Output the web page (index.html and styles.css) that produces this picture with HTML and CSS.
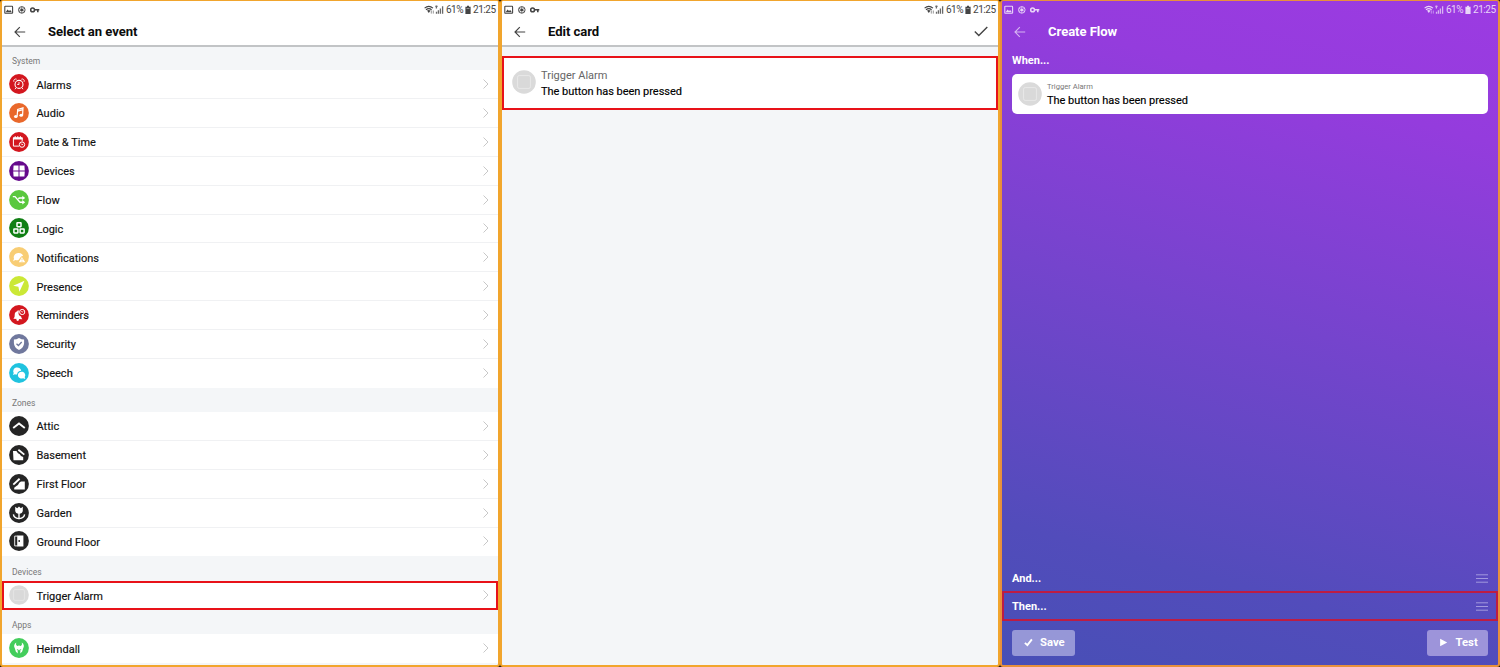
FILE: index.html
```html
<!DOCTYPE html>
<html lang="en">
<head>
<meta charset="utf-8">
<title>Flow editor</title>
<link rel="stylesheet" href="styles.css">
</head>
<body>
<svg class="sprite" xmlns="http://www.w3.org/2000/svg">
  <symbol id="chevron" viewBox="0 0 8 12"><path d="M1.5 1.5L6 6L1.5 10.5" fill="none" stroke="currentColor"/></symbol>
  <symbol id="back" viewBox="0 0 12 12"><path d="M11.2 6H1.2M5.8 1.2L1 6L5.8 10.8" fill="none" stroke="currentColor" stroke-width="1.15"/></symbol>
  <symbol id="notes" viewBox="0 0 36 10">
    <rect x=".8" y="1.3" width="7.8" height="7" rx=".6" fill="none" stroke="currentColor" stroke-width="1.1"/>
    <path d="M1.6 7.3L3.6 4.6L5 6L6.2 4.9L7.9 7.3Z" fill="currentColor"/>
    <circle cx="17.8" cy="4.9" r="3.3" fill="none" stroke="currentColor" stroke-width=".9"/>
    <path d="M17.8 1.6V8.2M14.9 3.3L20.7 6.5M14.9 6.5L20.7 3.3" stroke="currentColor" stroke-width=".75"/>
    <circle cx="17.8" cy="4.9" r="1.2" fill="currentColor"/>
    <circle cx="28.6" cy="4.9" r="1.9" fill="none" stroke="currentColor" stroke-width="1.5"/>
    <path d="M30.5 4.8H35.3M33.8 4.8V7.2" fill="none" stroke="currentColor" stroke-width="1.6"/>
  </symbol>
  <symbol id="signal" viewBox="0 0 21 10">
    <path d="M.6 3.1Q4.8 -.3 9 3.1M2 4.8Q4.8 2.6 7.6 4.8" fill="none" stroke="currentColor" stroke-width="1.2"/>
    <path d="M3 5.6Q4.8 4.3 6.6 5.6L4.8 8Z" fill="currentColor"/>
    <path d="M7.3 5.5V8.6M9.3 5.5V8.6" stroke="currentColor" stroke-width=".8" opacity=".7"/>
    <path d="M11.3 1.4H13.6M12.4 .6V3.6M12.5 8.8V6.8M14.4 8.8V5.2M16.4 8.8V3.5M18.6 8.8V1.3" stroke="currentColor" stroke-width="1.3" opacity=".8"/>
  </symbol>
  <symbol id="battery" viewBox="0 0 6 10"><path d="M2 .8H4V1.8H5.6V9H.4V1.8H2Z" fill="currentColor"/><path d="M1.5 3.6H4.5" stroke="#fff" stroke-width=".8" opacity=".6"/></symbol>
  <symbol id="menu" viewBox="0 0 12 9"><path d="M0 .8H12M0 4.5H12M0 8.2H12" stroke="currentColor" stroke-width=".9"/></symbol>
  <symbol id="button-device" viewBox="0 0 24 24">
    <circle cx="12" cy="12" r="11.8" fill="#dadada"/>
    <rect x="5.6" y="5.6" width="12.8" height="12.8" rx="1.5" fill="#d9d9d9" stroke="#ebebeb" stroke-width=".8"/>
  </symbol>
</svg>

<main class="board">
  <section class="panel">
    <header class="head">
      <div class="status">
        <svg class="notes"><use href="#notes"/></svg>
        <span class="stats"><svg class="signal"><use href="#signal"/></svg><span class="pct">61%</span><svg class="battery"><use href="#battery"/></svg><span class="time">21:25</span></span>
      </div>
      <div class="bar"><svg class="back"><use href="#back"/></svg><h1 class="title">Select an event</h1></div>
    </header>

    <h2 class="group first">System</h2>
    <ul class="list">
      <li class="row"><svg class="icon" viewBox="0 0 20 20"><circle cx="10" cy="10" r="9.9" fill="#d3171f"/><g fill="none" stroke="#fff"><circle cx="10" cy="10.4" r="4" stroke-width="1.1"/><path d="M10 8V10.5L8.2 10.4M7 13.8L6 15.2M13 13.8L14 15.2M4.9 7.8A2 2 0 0 1 7.6 5.2M15.1 7.8A2 2 0 0 0 12.4 5.2" stroke-width=".9"/></g></svg><span class="label">Alarms</span><svg class="chev"><use href="#chevron"/></svg></li>
      <li class="row"><svg class="icon" viewBox="0 0 20 20"><circle cx="10" cy="10" r="9.9" fill="#e9682b"/><path d="M8.1 13.4L8.7 6.4L14 4.9L13.6 12M8.7 8.2L13.9 6.7" fill="none" stroke="#fff" stroke-width="1.2"/><ellipse cx="6.8" cy="13.6" rx="1.8" ry="1.5" fill="#fff"/><ellipse cx="12.2" cy="12.2" rx="1.8" ry="1.5" fill="#fff"/></svg><span class="label">Audio</span><svg class="chev"><use href="#chevron"/></svg></li>
      <li class="row"><svg class="icon" viewBox="0 0 20 20"><circle cx="10" cy="10" r="9.9" fill="#d3171f"/><path d="M10 14.1H4.4V5.8H13.2V9.2M6.2 4.1V6.6M8.8 4.1V6.6M11.4 4.1V6.6" fill="none" stroke="#fff"/><path d="M4.2 5.5H13.5V7.6H4.2Z" fill="#fff"/><circle cx="13" cy="12.6" r="2.7" fill="#d3171f" stroke="#fff"/><path d="M12 11.5L13 12.8L14.2 12.2" fill="none" stroke="#fff" stroke-width=".8"/></svg><span class="label">Date &amp; Time</span><svg class="chev"><use href="#chevron"/></svg></li>
      <li class="row"><svg class="icon" viewBox="0 0 20 20"><circle cx="10" cy="10" r="9.9" fill="#660a8c"/><path d="M4.6 4.4H9.5V9.5H4.2ZM10.5 4.4H15.4L15.8 9.5H10.5ZM4.2 10.5H9.5V15.6H4.6ZM10.5 10.5H15.8L15.4 15.6H10.5Z" fill="#fff"/></svg><span class="label">Devices</span><svg class="chev"><use href="#chevron"/></svg></li>
      <li class="row"><svg class="icon" viewBox="0 0 20 20"><circle cx="10" cy="10" r="9.9" fill="#5ac83e"/><path d="M3.8 6.6H6L11 12.2H14.2M9.2 8.6L10.6 8H14.2" fill="none" stroke="#fff" stroke-width="1.4"/><path d="M13.3 5.8L16.2 8L13.3 10.1ZM13.3 10.1L16.2 12.2L13.3 14.4Z" fill="#fff"/></svg><span class="label">Flow</span><svg class="chev"><use href="#chevron"/></svg></li>
      <li class="row"><svg class="icon" viewBox="0 0 20 20"><circle cx="10" cy="10" r="9.9" fill="#107f14"/><g fill="none" stroke="#fff" stroke-width="1.5"><rect x="8" y="4.7" width="4" height="4" rx=".4"/><rect x="4.9" y="10.9" width="4" height="4" rx=".4"/><rect x="11.1" y="10.9" width="4" height="4" rx=".4"/></g></svg><span class="label">Logic</span><svg class="chev"><use href="#chevron"/></svg></li>
      <li class="row"><svg class="icon" viewBox="0 0 20 20"><circle cx="10" cy="10" r="9.9" fill="#f8cd74"/><path d="M4.1 14.2L5 11.7A4.8 4.3 0 1 1 14.1 8.8L12.2 9.5L9.4 13.1Q7.6 13.6 6.3 13Z" fill="#fff"/><path d="M12.9 10L16.2 15.3H9.8Z" fill="#fff"/><path d="M13 11.6V13.3M13 14V14.7" stroke="#f8cd74" stroke-width=".8"/></svg><span class="label">Notifications</span><svg class="chev"><use href="#chevron"/></svg></li>
      <li class="row"><svg class="icon" viewBox="0 0 20 20"><circle cx="10" cy="10" r="9.9" fill="#cbe836"/><path d="M15.5 4.7L4.2 9.7L9.4 10.8L10.4 15.8Z" fill="#fff"/></svg><span class="label">Presence</span><svg class="chev"><use href="#chevron"/></svg></li>
      <li class="row"><svg class="icon" viewBox="0 0 20 20"><circle cx="10" cy="10" r="9.9" fill="#d3171f"/><path d="M4.4 13.8Q6 12.6 5.7 10Q5.6 7 8.4 6.3L8.8 5.2L9.8 5.4V6.5A4 4 0 0 0 12.1 11.5Q12.3 13 13.4 14.2Z" fill="#fff"/><circle cx="8.7" cy="14.6" r="1.3" fill="#fff"/><circle cx="13.2" cy="7" r="2.6" fill="none" stroke="#fff"/><path d="M12.2 6.3L13.1 7.2L14.3 6.4" fill="none" stroke="#fff" stroke-width=".8"/></svg><span class="label">Reminders</span><svg class="chev"><use href="#chevron"/></svg></li>
      <li class="row"><svg class="icon" viewBox="0 0 20 20"><circle cx="10" cy="10" r="9.9" fill="#70789d"/><path d="M10 3.9Q12.5 5.4 15.1 5.4V9.3Q14.8 13.7 10 16Q5.2 13.7 4.9 9.3V5.4Q7.5 5.4 10 3.9Z" fill="#fff"/><path d="M7.5 9.7L9.4 11.5L12.7 8" fill="none" stroke="#70789d" stroke-width="1.3"/></svg><span class="label">Security</span><svg class="chev"><use href="#chevron"/></svg></li>
      <li class="row"><svg class="icon" viewBox="0 0 20 20"><circle cx="10" cy="10" r="9.9" fill="#20c3df"/><path d="M3.9 12L4.7 10A4 3.8 0 1 1 12.2 7.8A4.4 4.4 0 0 0 8 11.4Q6.8 11.6 6 11.3Z" fill="#fff"/><path d="M16.3 16L15.7 14A3.7 3.4 0 1 0 14 15.3Z" fill="#fff"/></svg><span class="label">Speech</span><svg class="chev"><use href="#chevron"/></svg></li>
    </ul>

    <h2 class="group">Zones</h2>
    <ul class="list">
      <li class="row"><svg class="icon" viewBox="0 0 20 20"><circle cx="10" cy="10" r="9.9" fill="#252525"/><path d="M4.2 12L10 7.5L15.8 12" fill="none" stroke="#fff" stroke-width="1.9"/></svg><span class="label">Attic</span><svg class="chev"><use href="#chevron"/></svg></li>
      <li class="row"><svg class="icon" viewBox="0 0 20 20"><circle cx="10" cy="10" r="9.9" fill="#252525"/><path d="M4 6H7.4L9 8.2L10.8 9.2L12 11L14.2 12V15.2H4.5Z" fill="#fff"/><path d="M9.4 4.8L15.3 9.6" stroke="#fff" stroke-width="1.8"/></svg><span class="label">Basement</span><svg class="chev"><use href="#chevron"/></svg></li>
      <li class="row"><svg class="icon" viewBox="0 0 20 20"><circle cx="10" cy="10" r="9.9" fill="#252525"/><path d="M15.8 7.5V15.5H5.2V13.8L7.4 12L9 11L10.2 8.8L12 7.5Z" fill="#fff"/><path d="M4.3 10.6L10.6 4.8" stroke="#fff" stroke-width="1.9"/></svg><span class="label">First Floor</span><svg class="chev"><use href="#chevron"/></svg></li>
      <li class="row"><svg class="icon" viewBox="0 0 20 20"><circle cx="10" cy="10" r="9.9" fill="#252525"/><path d="M6.2 3.8L8.2 5.2L10 3.4L11.8 5.2L13.8 3.8V7.8Q13.5 10.6 10 10.8Q6.5 10.6 6.2 7.8Z" fill="#fff"/><path d="M10 10V16.2M4.4 11.4Q5 15.2 9.6 15.6M15.6 11.4Q15 15.2 10.4 15.6" fill="none" stroke="#fff" stroke-width="1.4"/></svg><span class="label">Garden</span><svg class="chev"><use href="#chevron"/></svg></li>
      <li class="row"><svg class="icon" viewBox="0 0 20 20"><circle cx="10" cy="10" r="9.9" fill="#252525"/><path d="M8.6 5.1H5.7V14.9H8.6" fill="none" stroke="#fff" stroke-width=".9"/><path d="M8.2 4.4H14.4V15.6H8.2Z" fill="#fff"/><circle cx="10.2" cy="10" r=".9" fill="#252525"/></svg><span class="label">Ground Floor</span><svg class="chev"><use href="#chevron"/></svg></li>
    </ul>

    <h2 class="group low">Devices</h2>
    <ul class="list">
      <li class="row marked"><svg class="icon"><use href="#button-device"/></svg><span class="label">Trigger Alarm</span><svg class="chev"><use href="#chevron"/></svg></li>
    </ul>

    <h2 class="group low">Apps</h2>
    <ul class="list">
      <li class="row"><svg class="icon" viewBox="0 0 20 20"><circle cx="10" cy="10" r="9.9" fill="#43cd5c"/><path d="M7.2 4.6Q3.9 7.3 5.8 10.2L6.8 13.6L8.7 15.6V12.6L7.5 11L9.2 11.4L10 12.6L10.8 11.4L12.5 11L11.3 12.6V15.6L13.2 13.6L14.2 10.2Q16.1 7.3 12.8 4.6Q13.6 6.8 11.9 7.9Q10 7 8.1 7.9Q6.4 6.8 7.2 4.6Z" fill="#fff"/></svg><span class="label">Heimdall</span><svg class="chev"><use href="#chevron"/></svg></li>
    </ul>
  </section>

  <section class="panel">
    <header class="head">
      <div class="status">
        <svg class="notes"><use href="#notes"/></svg>
        <span class="stats"><svg class="signal"><use href="#signal"/></svg><span class="pct">61%</span><svg class="battery"><use href="#battery"/></svg><span class="time">21:25</span></span>
      </div>
      <div class="bar"><svg class="back"><use href="#back"/></svg><h1 class="title">Edit card</h1><svg class="confirm" viewBox="0 0 14 11"><path d="M.8 5.6L4.8 9.5L13.3 1" fill="none" stroke="currentColor" stroke-width="1.4"/></svg></div>
    </header>
    <div class="edit-card">
      <svg class="device"><use href="#button-device"/></svg>
      <div class="lines"><span class="source">Trigger Alarm</span><span class="event">The button has been pressed</span></div>
    </div>
  </section>

  <section class="panel flow">
    <header class="head">
      <div class="status">
        <svg class="notes"><use href="#notes"/></svg>
        <span class="stats"><svg class="signal"><use href="#signal"/></svg><span class="pct">61%</span><svg class="battery"><use href="#battery"/></svg><span class="time">21:25</span></span>
      </div>
      <div class="bar"><svg class="back"><use href="#back"/></svg><h1 class="title">Create Flow</h1></div>
    </header>
    <h2 class="step when">When...</h2>
    <div class="flow-card">
      <svg class="device"><use href="#button-device"/></svg>
      <div class="lines"><span class="source">Trigger Alarm</span><span class="event">The button has been pressed</span></div>
    </div>
    <div class="spacer"></div>
    <div class="step and"><span>And...</span><svg class="menu"><use href="#menu"/></svg></div>
    <div class="step then"><span>Then...</span><svg class="menu"><use href="#menu"/></svg></div>
    <footer class="actions">
      <button class="btn"><svg class="glyph" viewBox="0 0 8 8"><path d="M.8 4.3L3 6.4L7 1.3" fill="none" stroke="#fff" stroke-width="1.7"/></svg>Save</button>
      <button class="btn test"><svg class="glyph" viewBox="0 0 8 8"><path d="M1 .7L7.3 4L1 7.3Z" fill="#fff"/></svg>Test</button>
    </footer>
  </section>
</main>
</body>
</html>
```
FILE: styles.css
```css
* { box-sizing: border-box; }

body {
  margin: 0;
  background: #1e1408;
  font-family: Roboto, "Liberation Sans", sans-serif;
  color: #111;
}

svg { display: block; flex: none; }
.sprite { display: none; }
h1, h2, ul { margin: 0; padding: 0; font-weight: 400; list-style: none; }

.board {
  display: grid;
  grid-template-columns: 500px 500px 500px;
  width: 1500px;
  height: 667px;
}

.panel {
  display: flex;
  flex-direction: column;
  min-width: 0;
  height: 667px;
  overflow: hidden;
  border: solid #f1a52d;
  border-width: 1.5px 2px 2px;
  border-radius: 3px;
  background: #f4f6f8;
}

.head {
  flex: none;
  height: 46px;
  background: #fff;
  border-bottom: 2px solid #c2c4c6;
  color: #444;
}

.status {
  display: flex;
  justify-content: space-between;
  align-items: center;
  height: 17px;
  padding: 0 3px 0 2px;
  font-size: 10px;
  line-height: 17px;
}

.notes { width: 36px; height: 10px; }
.stats { display: flex; align-items: center; }
.signal { width: 21px; height: 10px; margin-right: 1px; }
.battery { width: 6px; height: 10px; margin: 0 2px 0 2px; }
.pct { width: 17px; letter-spacing: -.55px; }
.time { width: 22px; letter-spacing: -.45px; }

.bar { display: flex; align-items: center; height: 27px; padding: 0 10px 0 12px; }
.back { width: 12px; height: 12px; }
.title { flex: 1; margin-left: 22px; padding-top: 1px; font-size: 13.1px; line-height: 16px; font-weight: 700; color: #0c0c0c; letter-spacing: -.05px; }
.confirm { width: 14px; height: 11px; }

.group {
  flex: none;
  height: 24.6px;
  padding: 3px 0 0 10px;
  font-size: 8.5px;
  line-height: 24px;
  color: #777;
}
.group.first { height: 23.3px; line-height: 22px; }
.group.low { padding-top: 3.6px; }

.list { background: #fff; }
.row {
  display: flex;
  align-items: center;
  height: 28.85px;
  padding: 0 8px 0 7px;
  border-bottom: 1px solid #f0f1f3;
}
.row:last-child { border-bottom-color: transparent; }
.icon { width: 20px; height: 20px; }
.label {
  flex: 1;
  margin-left: 7.5px;
  padding-top: 1.8px;
  font-size: 11px;
  -webkit-text-stroke: .15px;
}
.chev { width: 8px; height: 12px; color: #c8c8c8; }
.row.marked { border: 0; outline: 2px solid #e81219; outline-offset: -2px; }

.device { width: 24px; height: 24px; }
.lines { display: flex; flex-direction: column; }
.event { color: #000; font-size: 11px; letter-spacing: -.03px; -webkit-text-stroke: .15px; }

.edit-card {
  display: flex;
  align-items: center;
  height: 54px;
  margin-top: 8.5px;
  padding: 0 8px;
  background: #fff;
  border: 2px solid #e81219;
}
.edit-card .device { margin-top: -1px; }
.edit-card .lines { margin-left: 5px; padding-top: 2px; }
.edit-card .source { color: #666; font-size: 11px; }
.edit-card .source, .edit-card .event { line-height: 16px; }

.panel.flow {
  border-color: #e8903c;
  background: linear-gradient(195deg, #9c3be2 0%, #943cdd 18%, #7544cd 48%, #524cbb 82%, #484fb6 100%);
}
.flow .head { background: none; border-color: transparent; color: #e8d4f8; }
.flow .title { color: #fff; }
.flow .back { opacity: .8; }

.step { color: #fff; font-size: 11px; font-weight: 700; }
.when { height: 26.5px; padding: 1px 0 0 10px; line-height: 26px; }

.flow-card {
  display: flex;
  align-items: center;
  height: 40px;
  margin: 0 10px;
  padding: 0 6px;
  background: #fff;
  border-radius: 5px;
}
.flow-card .lines { margin-left: 5px; padding-top: 3px; }
.flow-card .source { color: #777; font-size: 7.6px; line-height: 12px; }
.flow-card .event { line-height: 16px; }

.spacer { flex: 1; }
.and, .then {
  display: flex;
  align-items: center;
  justify-content: space-between;
  height: 28px;
  padding: 2px 10px 0;
}
.then { height: 30px; padding: 1px 8px 0; border: 2px solid #bd1c43; }
.menu { width: 12px; height: 9px; color: #aaa2e1; }

.actions { display: flex; justify-content: space-between; height: 44px; padding: 8.5px 10px 0 9.5px; }
.btn {
  display: flex;
  align-items: center;
  width: 63px;
  height: 26px;
  padding: 0 0 0 12px;
  border: 0;
  border-radius: 3px;
  background: #9697d7;
  color: #fff;
  font: 700 11.3px Roboto, sans-serif;
}
.btn.test { width: 61px; background: #9d94da; }
.glyph { width: 9px; height: 9px; margin-right: 7.5px; }
```
